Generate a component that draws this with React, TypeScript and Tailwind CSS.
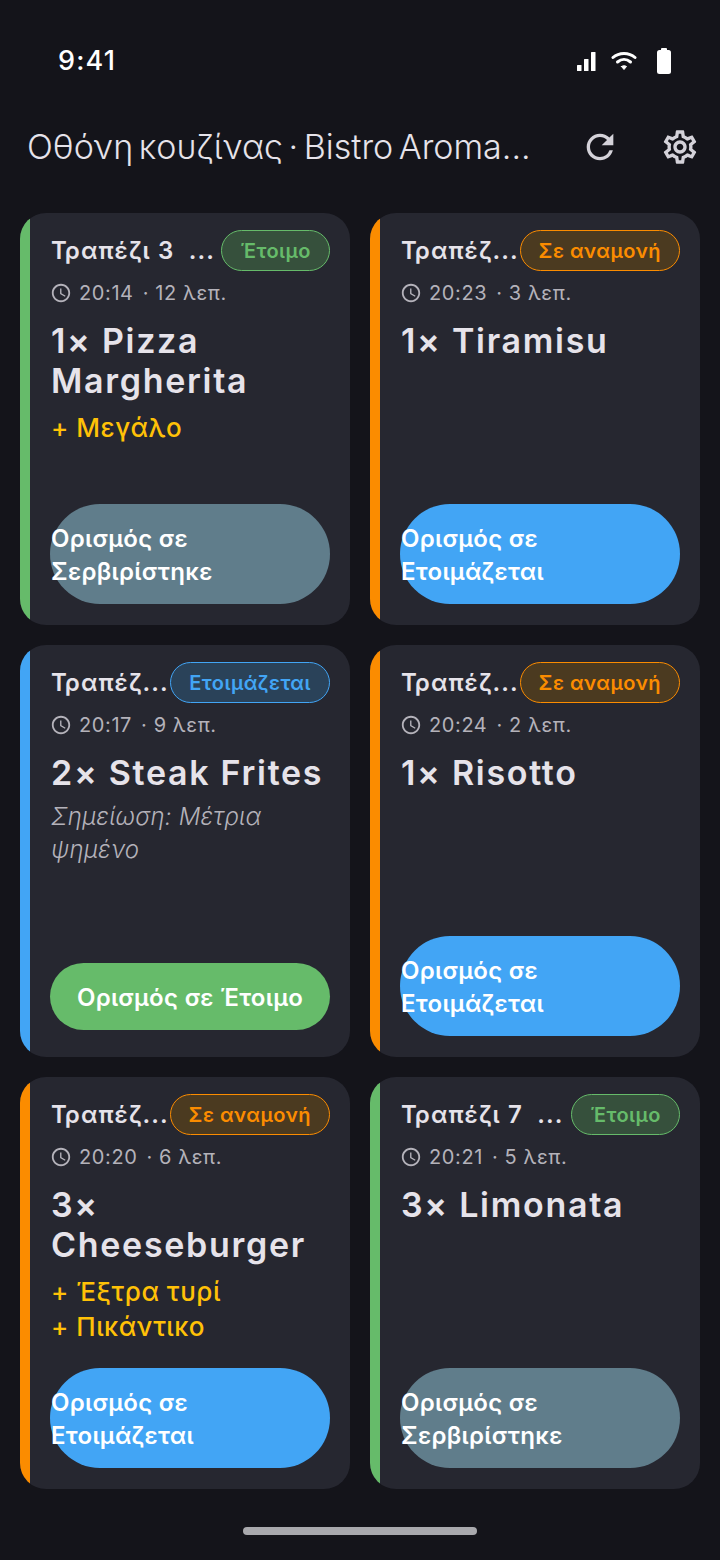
import { MdOutlineSchedule, MdOutlineSettings, MdRefresh } from 'react-icons/md';

type Tone = 'ready' | 'waiting' | 'cooking';

interface Order {
    table: string;
    badge: string;
    tone: Tone;
    time: string;
    age: string;
    dish: string[];
    extras?: string[];
    note?: string[];
    action: string[];
    actionClass: string;
}

const stripe: Record<Tone, string> = {
    ready: 'bg-[#66bb6a]',
    waiting: 'bg-[#fb8c00]',
    cooking: 'bg-[#42a5f5]',
};

const badgeStyle: Record<Tone, string> = {
    ready: 'border-[#66bb6a] bg-[#36503c] text-[#66bb6a]',
    waiting: 'border-[#fb8c00] bg-[#4b3a20] text-[#fb8c00]',
    cooking: 'border-[#42a5f5] bg-[#2a4259] text-[#42a5f5]',
};

const orders: Order[] = [
    {
        table: 'Τραπέζι 3  ...',
        badge: 'Έτοιμο',
        tone: 'ready',
        time: '20:14',
        age: '12 λεπ.',
        dish: ['1× Pizza', 'Margherita'],
        extras: ['+ Μεγάλο'],
        action: ['Ορισμός σε', 'Σερβιρίστηκε'],
        actionClass: 'bg-[#607d8b]',
    },
    {
        table: 'Τραπέζ...',
        badge: 'Σε αναμονή',
        tone: 'waiting',
        time: '20:23',
        age: '3 λεπ.',
        dish: ['1× Tiramisu'],
        action: ['Ορισμός σε', 'Ετοιμάζεται'],
        actionClass: 'bg-[#42a5f5]',
    },
    {
        table: 'Τραπέζ...',
        badge: 'Ετοιμάζεται',
        tone: 'cooking',
        time: '20:17',
        age: '9 λεπ.',
        dish: ['2× Steak Frites'],
        note: ['Σημείωση: Μέτρια', 'ψημένο'],
        action: ['Ορισμός σε Έτοιμο'],
        actionClass: 'bg-[#66bb6a]',
    },
    {
        table: 'Τραπέζ...',
        badge: 'Σε αναμονή',
        tone: 'waiting',
        time: '20:24',
        age: '2 λεπ.',
        dish: ['1× Risotto'],
        action: ['Ορισμός σε', 'Ετοιμάζεται'],
        actionClass: 'bg-[#42a5f5]',
    },
    {
        table: 'Τραπέζ...',
        badge: 'Σε αναμονή',
        tone: 'waiting',
        time: '20:20',
        age: '6 λεπ.',
        dish: ['3×', 'Cheeseburger'],
        extras: ['+ Έξτρα τυρί', '+ Πικάντικο'],
        action: ['Ορισμός σε', 'Ετοιμάζεται'],
        actionClass: 'bg-[#42a5f5]',
    },
    {
        table: 'Τραπέζι 7  ...',
        badge: 'Έτοιμο',
        tone: 'ready',
        time: '20:21',
        age: '5 λεπ.',
        dish: ['3× Limonata'],
        action: ['Ορισμός σε', 'Σερβιρίστηκε'],
        actionClass: 'bg-[#607d8b]',
    },
];

const OrderCard: React.FC<{ order: Order }> = ({ order }) => (
    <div className="flex h-[412px] overflow-hidden rounded-[26px] bg-[#262730]">
        <div className={`w-[10px] shrink-0 ${stripe[order.tone]}`} />
        <div className="flex min-w-0 flex-1 flex-col pt-[17px] pr-[20px] pb-[21px] pl-[20px]">
            <div className="flex h-[41px] items-center justify-between">
                <span className="pl-[1px] whitespace-pre text-[24px] font-semibold tracking-[1.1px] text-[#e6e3ea]">
                    {order.table}
                </span>
                <span
                    className={`flex h-[41px] shrink-0 items-center rounded-full border-[1.5px] px-[18px] text-[20px] font-semibold tracking-[0.5px] ${badgeStyle[order.tone]}`}
                >
                    {order.badge}
                </span>
            </div>
            <div className="mt-[10px] flex h-[24px] items-center text-[20px] tracking-[0.6px] text-[#b4b2ba]">
                <MdOutlineSchedule size={22} />
                <span className="ml-[7px]">{order.time}</span>
                <span className="ml-[9px]">· {order.age}</span>
            </div>
            <div className="mt-[16px] pl-[1px] text-[34px] leading-[40px] font-semibold tracking-[1.7px] text-[#e6e3ea]">
                {order.dish.map((line) => (
                    <div key={line}>{line}</div>
                ))}
            </div>
            {order.extras && (
                <div className="mt-[9px] pl-[1px] text-[26px] leading-[35px] font-medium tracking-[0.5px] text-[#ffc107]">
                    {order.extras.map((line) => (
                        <div key={line}>{line}</div>
                    ))}
                </div>
            )}
            {order.note && (
                <div className="mt-[7px] pl-[1px] text-[24px] leading-[33px] italic font-light tracking-[0.2px] text-[#b4b2ba]">
                    {order.note.map((line) => (
                        <div key={line}>{line}</div>
                    ))}
                </div>
            )}
            <div
                className={`mt-auto flex flex-col justify-center rounded-full pt-[2px] text-[24px] leading-[33px] font-semibold tracking-[0.3px] text-white ${order.actionClass} ${
                    order.action.length > 1 ? 'h-[100px] items-start pl-[1px]' : 'mb-[6px] h-[67px] items-center'
                }`}
            >
                {order.action.map((line) => (
                    <div key={line}>{line}</div>
                ))}
            </div>
        </div>
    </div>
);

export default function App() {
    return (
        <div className="flex h-[1560px] w-[720px] flex-col overflow-hidden bg-[#14141a] font-['Inter',sans-serif]">
            <div className="flex h-[78px] shrink-0 items-end justify-between pr-[49px] pl-[58px]">
                <span className="text-[27px] leading-[34px] font-medium tracking-[1.2px] text-white">9:41</span>
                <div className="flex items-center pb-[4px]">
                    <svg width="20" height="22" viewBox="0 0 20 22" fill="white">
                        <rect x="1" y="15" width="4.5" height="6" rx="0.5" />
                        <rect x="8" y="9" width="4.5" height="12" rx="0.5" />
                        <rect x="15" y="2" width="4.5" height="19" rx="0.5" />
                    </svg>
                    <svg className="ml-[15px]" width="26" height="22" viewBox="0 0 26 22" fill="none" stroke="white" strokeWidth="3" strokeLinecap="round">
                        <path d="M2 7.5C8 2 18 2 24 7.5" />
                        <path d="M6.5 12C10.5 8.7 15.5 8.7 19.5 12" />
                        <path d="M10.5 16.5L13 19.5L15.5 16.5C14 15.5 12 15.5 10.5 16.5Z" fill="white" strokeWidth="1" />
                    </svg>
                    <svg className="ml-[20px]" width="14" height="26" viewBox="0 0 14 26" fill="white">
                        <rect x="4" y="0" width="6" height="3" rx="1" />
                        <rect x="0" y="2" width="14" height="24" rx="2.5" />
                    </svg>
                </div>
            </div>
            <div className="flex h-[135px] shrink-0 items-center justify-between pt-[2px] pr-[20px] pl-[27px]">
                <span className="whitespace-pre text-[34px] font-light [word-spacing:-4px] text-[#e6e3ea]">Οθόνη κουζίνας · Bistro Aroma...</span>
                <div className="flex items-center gap-[40px] text-[#d4d2d9]">
                    <MdRefresh size={40} />
                    <MdOutlineSettings size={40} />
                </div>
            </div>
            <div className="grid grid-cols-2 gap-[20px] px-[20px]">
                {orders.map((order) => (
                    <OrderCard key={order.time} order={order} />
                ))}
            </div>
            <div className="mt-auto mb-[25px] flex justify-center">
                <div className="h-[8px] w-[234px] rounded-full bg-[#a9a9ad]" />
            </div>
        </div>
    );
}
